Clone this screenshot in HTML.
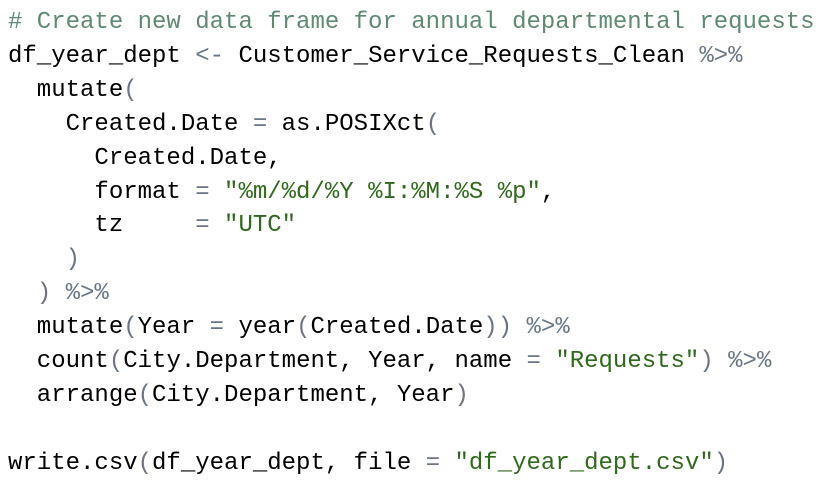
<!DOCTYPE html>
<html><head><meta charset="utf-8"><style>
html,body{margin:0;padding:0;background:#fff;width:836px;height:488px;overflow:hidden}
pre{margin:0;padding:6px 0 0 8px;font-family:"Liberation Mono",monospace;font-size:24px;line-height:33.9px;color:#000;letter-spacing:0}
.c{color:#5e8a72}.o{color:#687687}.s{color:#2f6a1c}
</style></head><body><pre><span class="c"># Create new data frame for annual departmental requests</span>
df_year_dept <span class="o">&lt;-</span> Customer_Service_Requests_Clean <span class="o">%&gt;%</span>
  mutate<span class="o">(</span>
    Created.Date <span class="o">=</span> as.POSIXct<span class="o">(</span>
      Created.Date,
      format <span class="o">=</span> <span class="s">"%m/%d/%Y %I:%M:%S %p"</span>,
      tz     <span class="o">=</span> <span class="s">"UTC"</span>
    <span class="o">)</span>
  <span class="o">)</span> <span class="o">%&gt;%</span>
  mutate<span class="o">(</span>Year <span class="o">=</span> year<span class="o">(</span>Created.Date<span class="o">))</span> <span class="o">%&gt;%</span>
  count<span class="o">(</span>City.Department, Year, name <span class="o">=</span> <span class="s">"Requests"</span><span class="o">)</span> <span class="o">%&gt;%</span>
  arrange<span class="o">(</span>City.Department, Year<span class="o">)</span>

write.csv<span class="o">(</span>df_year_dept, file <span class="o">=</span> <span class="s">"df_year_dept.csv"</span><span class="o">)</span></pre></body></html>
